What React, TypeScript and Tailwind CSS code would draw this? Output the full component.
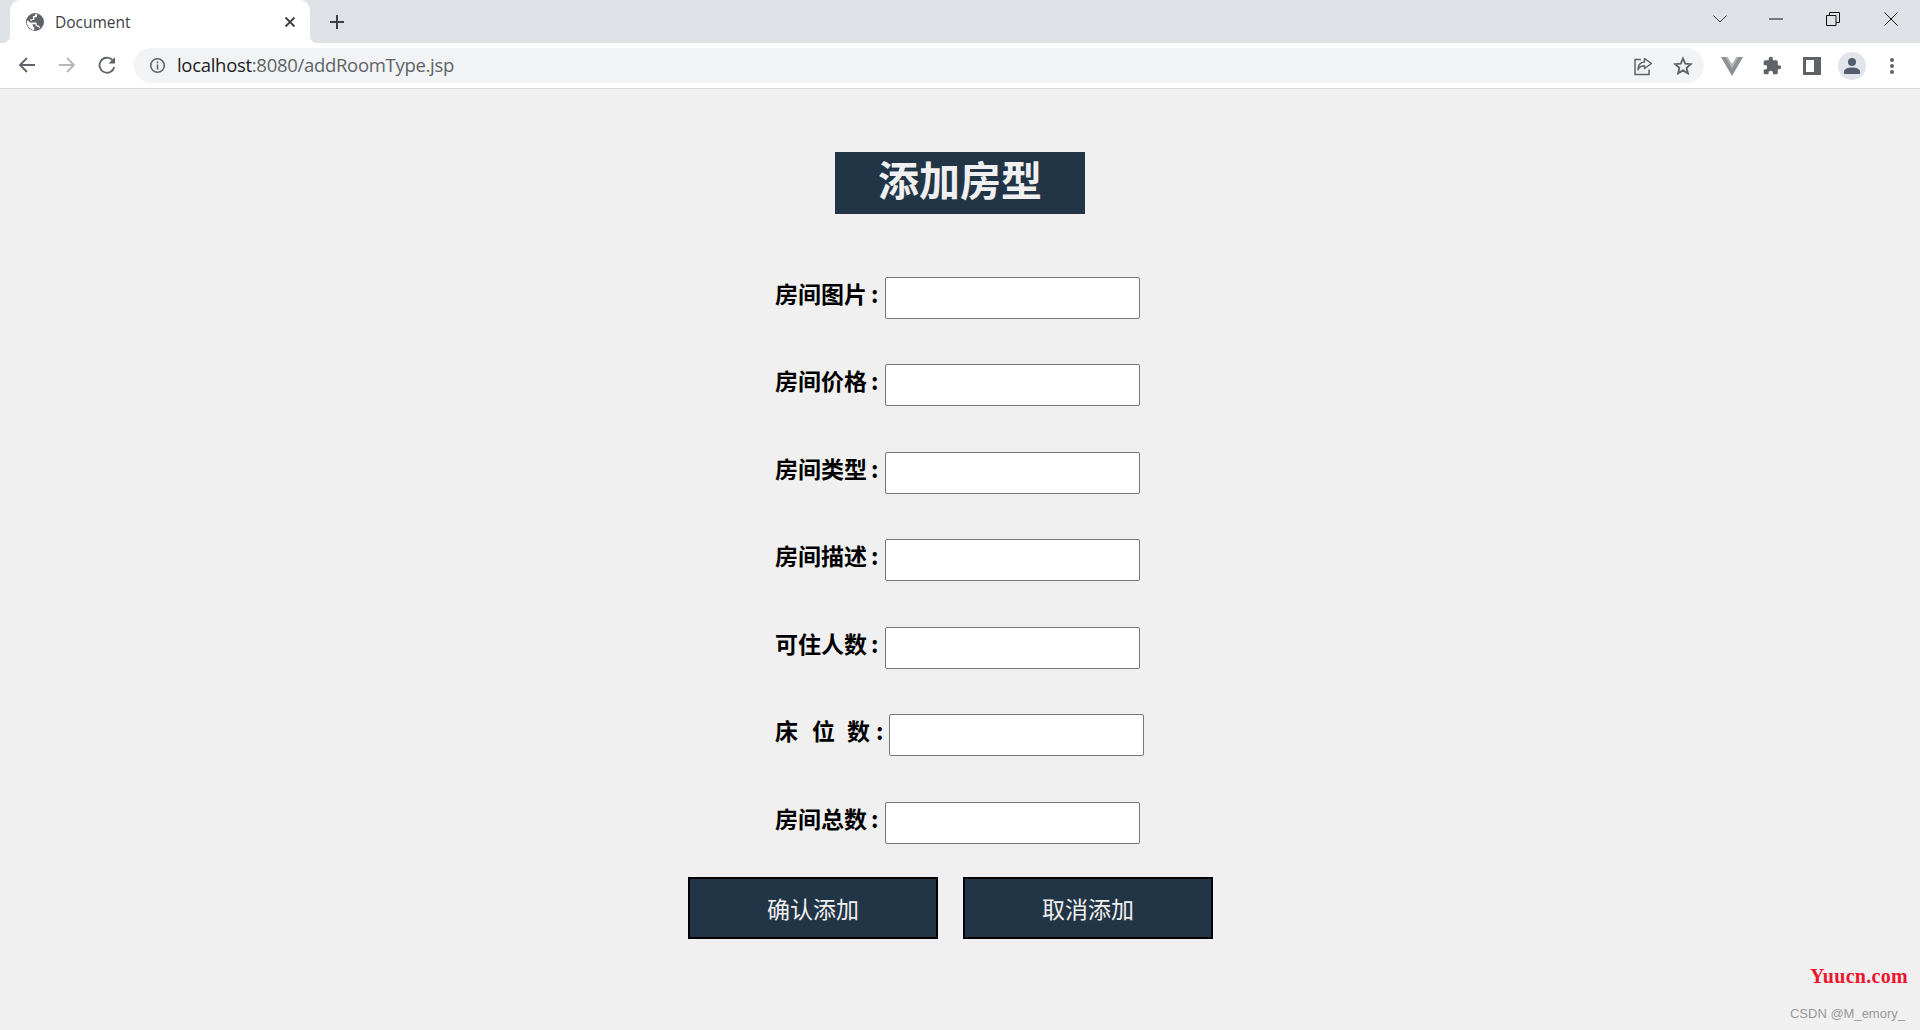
import React from "react";

const CJK = "font-['Noto_Sans_CJK_SC','Liberation_Sans',sans-serif]";

function Globe() {
  return (
    <svg width="18" height="18" viewBox="0 0 24 24" className="shrink-0">
      <circle cx="12" cy="12" r="12" fill="#5f6368" />
      <path d="M2 9.500 9 15.700v1.200c0 1.100.9 2 2 2V23H9.600C5 21 1 17 1.200 12zM7.200 12.800h6c.6 0 1 .4 1 1v2.400h1.600c.9 0 1.600.6 1.900 1.400l1.500 1.700-.9 1-2-1.500-1.800-1h-1.800v-2.800H7.200zM14.800 1.800v1.700c0 1.300-.9 2.200-2.100 2.200h-1.500v2.500c0 .7-.5 1.100-1.100 1.100H7.400v1.700h-1.600V8.200h3.400V4h2.300l1.100-2.600z" fill="#fff" />
    </svg>
  );
}

function Back({ color }: { color: string }) {
  return (
    <svg width="18" height="18" viewBox="0 0 18 18" fill="none" stroke={color} strokeWidth="1.800">
      <path d="M17 9H2M9 2 2 9l7 7" />
    </svg>
  );
}

function Forward() {
  return (
    <svg width="18" height="18" viewBox="0 0 18 18" fill="none" stroke="#b4b6b9" strokeWidth="1.800">
      <path d="M1 9h15M9 2l7 7-7 7" />
    </svg>
  );
}

function Reload() {
  return (
    <svg width="18" height="18" viewBox="0 0 18 18">
      <path d="M14.400 4A7.500 7.500 0 1 0 16.300 11" fill="none" stroke="#5f6368" strokeWidth="1.800" />
      <path d="M17 1v6.500h-6.500z" fill="#5f6368" />
    </svg>
  );
}

function Field({ label, wide }: { label: string; wide?: boolean }) {
  return (
    <div className="flex h-[42px] items-center">
      {wide ? (
        <div className="mt-[-9px] flex items-center text-[23px] font-bold text-black">
          <span className="w-[37px]">床</span>
          <span className="w-[35px]">位</span>
          <span className="w-[29px]">数</span>
          <span className="w-[13px] font-['Noto_Sans_CJK_TC',sans-serif]">:</span>
        </div>
      ) : (
        <div className="mt-[-9px] flex w-[110px] items-center text-[23px] font-bold text-black">
          <span className="w-[96px] whitespace-nowrap">{label}</span>
          <span className="font-['Noto_Sans_CJK_TC',sans-serif]">:</span>
        </div>
      )}
      <input
        type="text"
        className="h-[42px] w-[255px] rounded-[2px] border border-[#767676] bg-white"
      />
    </div>
  );
}

export default function App() {
  return (
    <div className={`flex h-[1030px] w-[1920px] flex-col overflow-hidden bg-[#f0f0f0] ${CJK}`}>
      {/* tab strip */}
      <div className="flex h-[43px] shrink-0 items-end bg-[#dee1e6] font-['Liberation_Sans',sans-serif]">
        <div className="relative ml-[10px] flex h-[43px] w-[300px] items-center rounded-t-[10px] bg-white pl-[16px] pr-[12px]">
          <span className="absolute bottom-0 left-[-8px] h-[8px] w-[8px] bg-[radial-gradient(circle_at_0_0,#dee1e6_8px,#fff_8.500px)]" />
          <span className="absolute bottom-0 right-[-8px] h-[8px] w-[8px] bg-[radial-gradient(circle_at_100%_0,#dee1e6_8px,#fff_8.500px)]" />
          <Globe />
          <span className="ml-[11px] mt-[2px] font-['Open_Sans',sans-serif] text-[15.500px] text-[#3c4043]">Document</span>
          <svg width="12" height="12" viewBox="0 0 12 12" className="ml-auto mr-[2px]" fill="none" stroke="#3c4043" strokeWidth="1.800">
            <path d="M1.500 1.500l9 9M10.500 1.500l-9 9" />
          </svg>
        </div>
        <svg width="16" height="16" viewBox="0 0 16 16" className="mb-[13px] ml-[19px]" fill="none" stroke="#3c4043" strokeWidth="2">
          <path d="M8 1v14M1 8h14" />
        </svg>
        <div className="mb-[17px] ml-auto flex items-center">
          <svg width="14" height="8" viewBox="0 0 14 8" className="mr-[42px]" fill="none" stroke="#3c4043" strokeWidth="1">
            <path d="M.5.500 7 7 13.500.500" />
          </svg>
          <svg width="14" height="2" viewBox="0 0 14 2" className="mr-[43px]" fill="none" stroke="#111" strokeWidth="1">
            <path d="M0 1h14" />
          </svg>
          <svg width="14" height="14" viewBox="0 0 14 14" className="mr-[44px]" fill="none" stroke="#111" strokeWidth="1">
            <path d="M.5 3.500h9.500V13.500H.5zM3.500 3.500V.5h10v10h-3.500" />
          </svg>
          <svg width="14" height="14" viewBox="0 0 14 14" className="mr-[22px]" fill="none" stroke="#111" strokeWidth="1">
            <path d="M.5.500l13 13M13.500.500l-13 13" />
          </svg>
        </div>
      </div>

      {/* toolbar */}
      <div className="flex h-[46px] shrink-0 items-center border-b border-[#d9dadb] bg-white font-['Liberation_Sans',sans-serif]">
        <div className="mb-[1px] ml-[18px] flex items-center gap-[22px]">
          <Back color="#5f6368" />
          <Forward />
          <Reload />
        </div>
        <div className="ml-[18px] flex h-[35px] w-[1570px] items-center rounded-full bg-[#f1f3f4] pl-[15px] pr-[11px]">
          <svg width="17" height="17" viewBox="0 0 17 17" fill="none" stroke="#5f6368" strokeWidth="1.600">
            <circle cx="8.500" cy="8.500" r="6.800" />
            <path d="M8.500 7.500v5M8.500 4.500v1.800" />
          </svg>
          <span className="mb-[2px] ml-[11px] font-['Open_Sans',sans-serif] text-[18.500px] tracking-[-0.3px] text-[#202124]">
            localhost<span className="text-[#5f6368]">:8080/addRoomType.jsp</span>
          </span>
          <svg width="20" height="20" viewBox="0 0 20 20" className="ml-auto" fill="none" stroke="#5f6368" strokeWidth="1.500">
            <path d="M8 3.500H2v15h14v-5" />
            <path d="M11.500 2.500 18.500 7.500l-7 5V9.800c-3.500 0-5.500 1.200-6.500 4 0-5 2.500-7.500 6.500-7.800z" strokeLinejoin="round" />
          </svg>
          <svg width="20" height="20" viewBox="0 0 24 24" className="ml-[20px]" fill="none" stroke="#5f6368" strokeWidth="2.200" strokeLinejoin="miter">
            <path d="m12 3 2.700 6.200 6.800.6-5.200 4.400 1.600 6.600-5.900-3.500-5.900 3.500 1.600-6.600-5.200-4.400 6.800-.6z" />
          </svg>
        </div>
        <svg width="22" height="20" viewBox="0 0 22 20" className="ml-[17px]">
          <path d="M0 1h6.500L11 8.500 15.500 1H22L11 20z" fill="#8d9093" />
          <path d="M4.500 1 11 12.500 17.500 1h-2L11 8.500 6.500 1z" fill="#b5b7b9" />
        </svg>
        <svg width="20" height="20" viewBox="0 0 24 24" className="ml-[19px]" fill="#5f6368">
          <path d="M20.500 11H19V7a2 2 0 0 0-2-2h-4V3.500a2.500 2.500 0 0 0-5 0V5H4a2 2 0 0 0-2 2v3.800h1.500a2.700 2.700 0 0 1 0 5.400H2V20a2 2 0 0 0 2 2h3.800v-1.500a2.700 2.700 0 0 1 5.400 0V22H17a2 2 0 0 0 2-2v-4h1.500a2.500 2.500 0 0 0 0-5z" />
        </svg>
        <div className="ml-[21px] h-[18px] w-[18px] border-[3px] border-r-[7px] border-[#5f6368] bg-white" />
        <div className="ml-[17px] flex h-[28px] w-[28px] items-center justify-center rounded-full bg-[#e1e4ea]">
          <svg width="18" height="18" viewBox="0 0 18 18" fill="#515c6f">
            <circle cx="9" cy="5" r="4" />
            <path d="M1 17v-2.500C1 12 5 10.500 9 10.500s8 1.500 8 4V17z" />
          </svg>
        </div>
        <svg width="6" height="18" viewBox="0 0 6 18" className="ml-[23px]" fill="#5f6368">
          <circle cx="3" cy="3" r="2" />
          <circle cx="3" cy="9" r="2" />
          <circle cx="3" cy="15" r="2" />
        </svg>
      </div>

      {/* page */}
      <main className="relative flex flex-1 flex-col">
        <h1 className="ml-[835px] mt-[63px] flex h-[62px] w-[250px] items-center justify-center bg-[#223546] pb-[8px] text-[41px] font-bold text-[#f0f0f0]">
          添加房型
        </h1>
        <form className="ml-[775px] mt-[62.700px] flex flex-col gap-[45.500px]">
          <Field label="房间图片" />
          <Field label="房间价格" />
          <Field label="房间类型" />
          <Field label="房间描述" />
          <Field label="可住人数" />
          <Field label="床位数" wide />
          <Field label="房间总数" />
        </form>
        <div className="ml-[688px] mt-[33.300px] flex gap-[25px]">
          <button className="h-[62px] w-[250px] border-2 border-black bg-[#223546] text-[23px] text-[#f0f0f0]">确认添加</button>
          <button className="h-[62px] w-[250px] border-2 border-black bg-[#223546] text-[23px] text-[#f0f0f0]">取消添加</button>
        </div>
        <span className="absolute bottom-[39px] right-[12px] font-['Liberation_Serif',serif] text-[20px] font-bold tracking-[0.3px] text-[#f0142d]">Yuucn.com</span>
        <span className="absolute bottom-[7px] right-[15px] font-['Liberation_Sans',sans-serif] text-[13px] text-[#999]">CSDN @M_emory_</span>
      </main>
    </div>
  );
}
